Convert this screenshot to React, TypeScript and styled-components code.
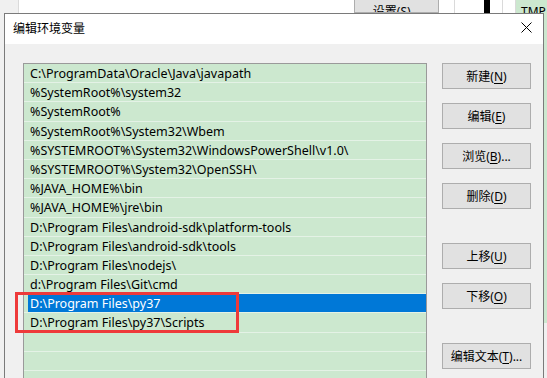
import React from "react";
import styled, { createGlobalStyle } from "styled-components";

const Global = createGlobalStyle`
  html, body { margin: 0; padding: 0; }
  body { background: #f0f0f0; font-family: "Noto Sans", "Noto Sans CJK SC", sans-serif; }
`;

const Desktop = styled.div`
  position: relative;
  width: 547px;
  height: 378px;
  overflow: hidden;
  background: #f0f0f0;
`;

const BackWindow = styled.div`
  display: flex;
  height: 13px;
  background: #fff;
`;

const BackCell = styled.div<{ $w: number; $bg?: string; $line?: boolean }>`
  flex: 0 0 ${(p) => p.$w}px;
  background: ${(p) => p.$bg || "#fff"};
  border-right: ${(p) => (p.$line ? "1px solid #dadada" : "none")};
  box-sizing: border-box;
  overflow: hidden;
`;

const BackButton = styled.div`
  flex: 0 0 85px;
  box-sizing: border-box;
  background: #e1e1e1;
  border: 1px solid #adadad;
  border-top: none;
  display: flex;
  justify-content: center;
  font-size: 12px;
  line-height: 14px;
  padding-top: 5px;
  color: #000;
  overflow: hidden;
`;

const BackGreen = styled.div`
  flex: 1;
  background: #cce8cf;
  font-size: 12px;
  line-height: 14px;
  padding: 5px 0 0 5px;
  color: #000;
  overflow: hidden;
  white-space: nowrap;
`;

const SideStrip = styled.div`
  position: absolute;
  right: 0;
  top: 13px;
  width: 3px;
  height: 310px;
  background: #cce8cf;
`;

const Dialog = styled.div`
  position: absolute;
  left: 4px;
  top: 13px;
  width: 540px;
  height: 380px;
  box-sizing: border-box;
  border: 1px solid #7a7a7a;
  background: #f0f0f0;
  display: flex;
  flex-direction: column;
`;

const TitleBar = styled.div`
  height: 30px;
  box-sizing: border-box;
  background: #fff;
  display: flex;
  align-items: center;
  justify-content: space-between;
  padding: 0 11px 3px 8px;
  flex: 0 0 auto;
`;

const Title = styled.span`
  font-size: 12px;
  color: #000;
`;

const Body = styled.div`
  display: flex;
  gap: 15px;
  padding: 19px 12px 0 18px;
  flex: 1;
  min-height: 0;
`;

const List = styled.div`
  width: 404px;
  box-sizing: border-box;
  border: 1px solid #9a9a9a;
  border-bottom: none;
  background: #cce8cf;
  display: flex;
  flex-direction: column;
  flex: 0 0 auto;
`;

const Row = styled.div`
  height: 19.2px;
  box-sizing: border-box;
  border-bottom: 1px solid #e4f2e6;
  display: flex;
  padding-left: 4px;
`;

const Label = styled.div<{ $selected?: boolean }>`
  flex: 1;
  padding-left: 2px;
  font-size: 12.5px;
  line-height: 19px;
  white-space: nowrap;
  color: ${(p) => (p.$selected ? "#fff" : "#000")};
  background: ${(p) => (p.$selected ? "#0078d7" : "transparent")};
`;

const Buttons = styled.div`
  display: flex;
  flex-direction: column;
  width: 89px;
`;

const Button = styled.div<{ $gapTop?: number }>`
  height: 26px;
  box-sizing: border-box;
  margin-top: ${(p) => p.$gapTop ?? 0}px;
  background: #e1e1e1;
  border: 1px solid #adadad;
  display: flex;
  align-items: center;
  justify-content: center;
  font-size: 12px;
  color: #000;
`;

const Key = styled.span`
  text-decoration: underline;
  text-underline-offset: 2px;
`;

const Highlight = styled.div`
  position: absolute;
  left: 15px;
  top: 292px;
  width: 224px;
  height: 41px;
  box-sizing: border-box;
  border: 3px solid #ee3a3a;
  pointer-events: none;
`;

const Close = () => (
  <svg width="11" height="11" viewBox="0 0 11 11">
    <path d="M0.5 0.5 L10.5 10.5 M10.5 0.5 L0.5 10.5" stroke="#000" strokeWidth="1" fill="none" />
  </svg>
);

const paths = [
  "C:\\ProgramData\\Oracle\\Java\\javapath",
  "%SystemRoot%\\system32",
  "%SystemRoot%",
  "%SystemRoot%\\System32\\Wbem",
  "%SYSTEMROOT%\\System32\\WindowsPowerShell\\v1.0\\",
  "%SYSTEMROOT%\\System32\\OpenSSH\\",
  "%JAVA_HOME%\\bin",
  "%JAVA_HOME%\\jre\\bin",
  "D:\\Program Files\\android-sdk\\platform-tools",
  "D:\\Program Files\\android-sdk\\tools",
  "D:\\Program Files\\nodejs\\",
  "d:\\Program Files\\Git\\cmd",
  "D:\\Program Files\\py37",
  "D:\\Program Files\\py37\\Scripts",
  "",
  "",
  "",
];

const buttons: { label: string; key: string; suffix?: string; gap: number }[] = [
  { label: "新建", key: "N", gap: 0 },
  { label: "编辑", key: "E", gap: 14 },
  { label: "浏览", key: "B", suffix: "...", gap: 14 },
  { label: "删除", key: "D", gap: 14 },
  { label: "上移", key: "U", gap: 34 },
  { label: "下移", key: "O", gap: 14 },
  { label: "编辑文本", key: "T", suffix: "...", gap: 34 },
];

export default function App() {
  return (
    <Desktop>
      <Global />
      <BackWindow>
        <BackCell $w={19} $bg="#f0f0f0" $line />
        <BackCell $w={335} />
        <BackButton>设置(S)...</BackButton>
        <BackCell $w={16} $line />
        <BackCell $w={29} />
        <BackCell $w={6} $bg="#000" />
        <BackCell $w={13} $line />
        <BackCell $w={13} $line />
        <BackGreen>TMP</BackGreen>
      </BackWindow>
      <SideStrip />
      <Dialog>
        <TitleBar>
          <Title>编辑环境变量</Title>
          <Close />
        </TitleBar>
        <Body>
          <List>
            {paths.map((p, i) => (
              <Row key={i}>
                <Label $selected={i === 12}>{p}</Label>
              </Row>
            ))}
          </List>
          <Buttons>
            {buttons.map((b) => (
              <Button key={b.key} $gapTop={b.gap}>
                {b.label}(<Key>{b.key}</Key>){b.suffix || ""}
              </Button>
            ))}
          </Buttons>
        </Body>
      </Dialog>
      <Highlight />
    </Desktop>
  );
}
